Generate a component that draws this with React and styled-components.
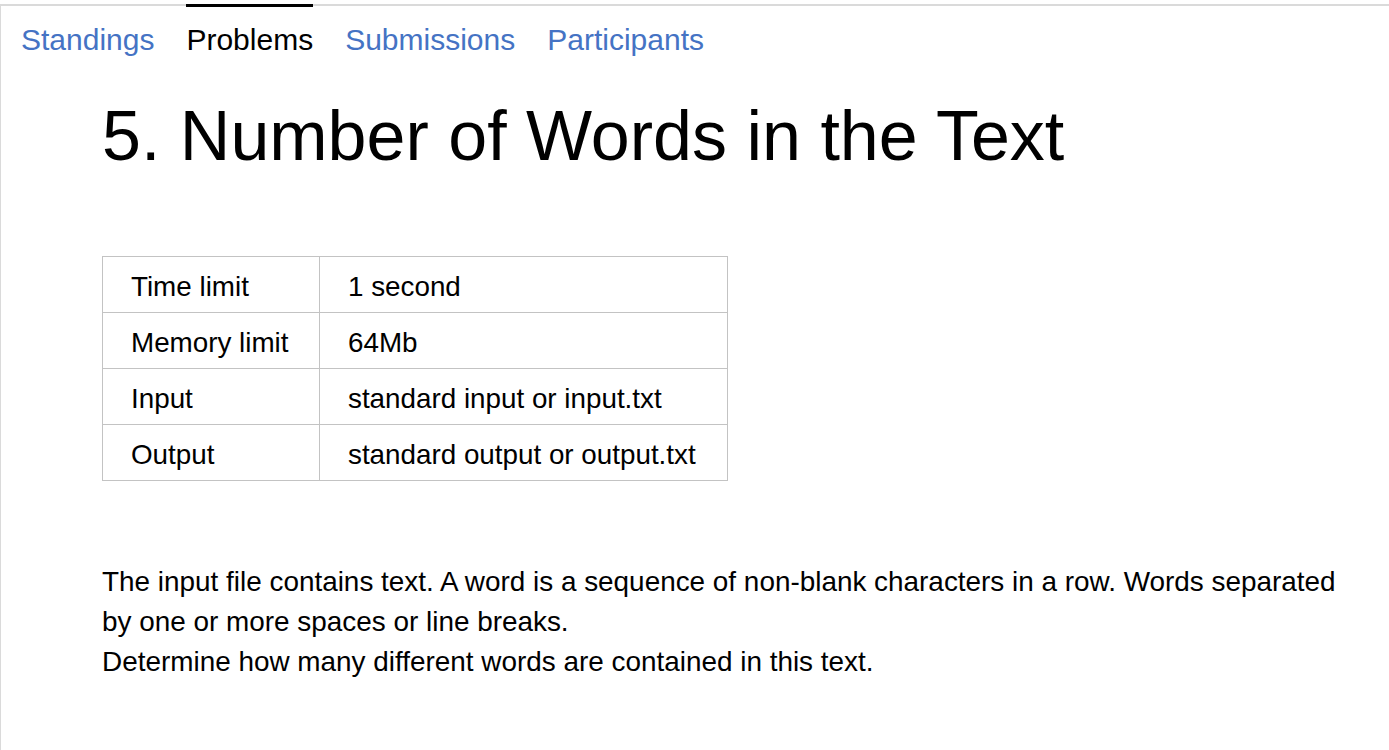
import React from "react";
import styled, { createGlobalStyle } from "styled-components";

const GlobalStyle = createGlobalStyle`
  body {
    margin: 0;
    background: #fff;
    font-family: "Liberation Sans", Arial, sans-serif;
    color: #000;
  }
`;

const Page = styled.div`
  margin-top: 4px;
  min-height: 746px;
  border-top: 2px solid #dadada;
  border-left: 1px solid #dadada;
  box-sizing: border-box;
`;

const Tabs = styled.nav`
  display: flex;
  padding-left: 20px;
  margin-top: -2px;
`;

const Tab = styled.a`
  display: block;
  margin-right: 32px;
  padding-top: 13px;
  border-top: 3px solid ${(p) => (p.active ? "#000" : "transparent")};
  font-size: 30px;
  line-height: 40px;
  color: ${(p) => (p.active ? "#000" : "#4573c4")};
  text-decoration: none;
  cursor: pointer;
`;

const Content = styled.main`
  padding: 36px 0 0 101px;
`;

const Title = styled.h1`
  margin: 0 0 80px;
  font-size: 70px;
  line-height: 80px;
  font-weight: normal;
`;

const Limits = styled.table`
  border-collapse: collapse;
  font-size: 27.8px;
  margin-bottom: 81px;
`;

const Cell = styled.td`
  width: ${(p) => p.w}px;
  height: 56px;
  padding: 4px 0 0 28px;
  border: 1px solid #c3c3c3;
  box-sizing: border-box;
  line-height: 40px;
  vertical-align: middle;
`;

const Statement = styled.div`
  font-size: 27.9px;
  line-height: 40px;
  max-width: 1250px;

  p {
    margin: 0;
  }
`;

const limits = [
  ["Time limit", "1 second"],
  ["Memory limit", "64Mb"],
  ["Input", "standard input or input.txt"],
  ["Output", "standard output or output.txt"],
];

export default function App() {
  return (
    <>
      <GlobalStyle />
      <Page>
        <Tabs>
          <Tab>Standings</Tab>
          <Tab active>Problems</Tab>
          <Tab>Submissions</Tab>
          <Tab>Participants</Tab>
        </Tabs>
        <Content>
          <Title>5. Number of Words in the Text</Title>
          <Limits>
            <tbody>
              {limits.map(([name, value]) => (
                <tr key={name}>
                  <Cell w={217}>{name}</Cell>
                  <Cell w={408}>{value}</Cell>
                </tr>
              ))}
            </tbody>
          </Limits>
          <Statement>
            <p>
              The input file contains text. A word is a sequence of non-blank
              characters in a row. Words separated by one or more spaces or line
              breaks.
            </p>
            <p>Determine how many different words are contained in this text.</p>
          </Statement>
        </Content>
      </Page>
    </>
  );
}
